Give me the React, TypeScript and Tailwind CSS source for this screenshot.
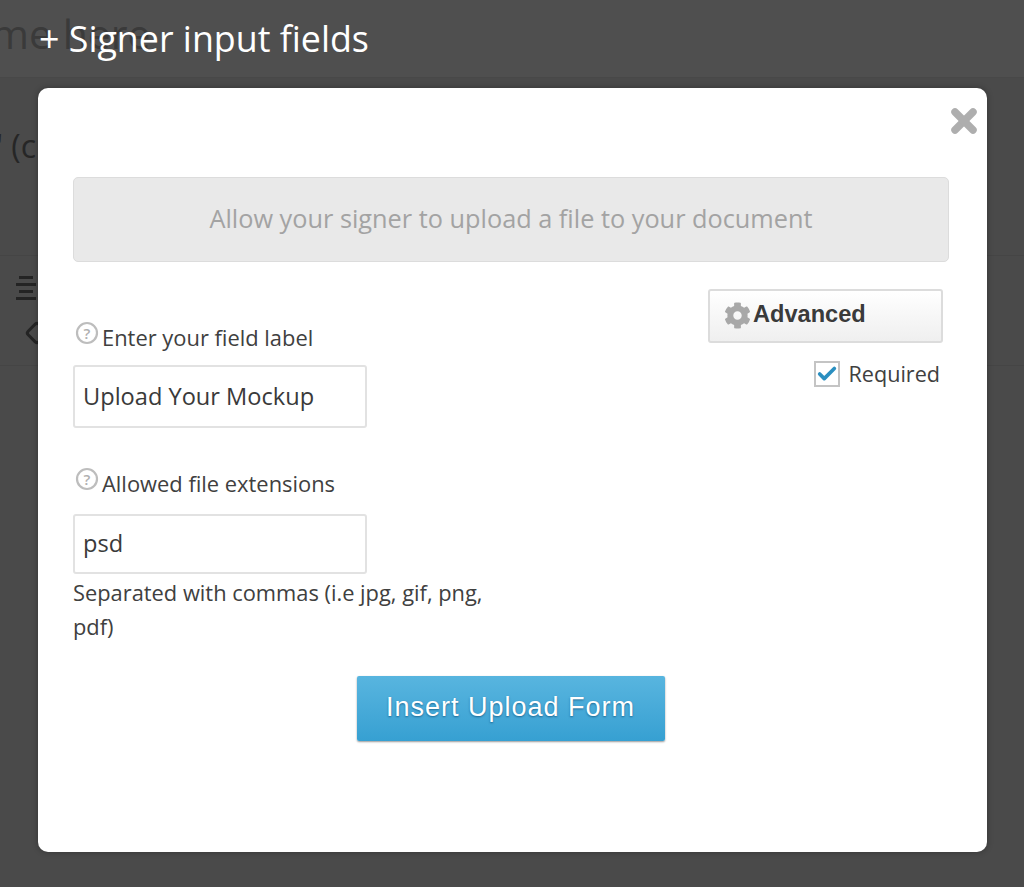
import { Check, X } from "lucide-react";
import { FaCog } from "react-icons/fa";

const sans = "font-['Open_Sans',sans-serif]";

function HelpIcon() {
  return (
    <svg width="24" height="24" viewBox="0 0 24 24" className="shrink-0">
      <circle cx="12" cy="12" r="10" fill="none" stroke="#bdbdbd" strokeWidth="2.2" />
      <text x="12" y="17.5" textAnchor="middle" fontSize="15" fontWeight="600" fill="#b0b0b0" fontFamily="Open Sans, sans-serif">?</text>
    </svg>
  );
}

function Field({ label, value, h, gap }: { label: string; value: string; h: string; gap: string }) {
  return (
    <div className="flex flex-col">
      <div className={`ml-[2px] flex items-start gap-[3px] ${gap}`}>
        <div className="-mt-[2px]"><HelpIcon /></div>
        <span className="text-[21.9px] leading-[30px] text-[#404040]">{label}</span>
      </div>
      <div className={`w-[294px] ${h} flex items-center rounded-[3px] border-2 border-[#e2e2e2] pl-[8px] text-[23.6px] text-[#3a3a3a]`}>
        {value}
      </div>
    </div>
  );
}

export default function App() {
  return (
    <div className={`relative h-[887px] w-full overflow-hidden bg-[#4a4a4a] ${sans}`}>
      {/* page behind the overlay */}
      <div className="relative h-[78px] border-b border-[#484848] bg-[#4f4f4f]">
        <span className="absolute -left-[9px] top-[3px] whitespace-nowrap text-[41px] leading-[60px] text-[#3a3a3a]">me here</span>
        <span className="absolute left-[39px] top-[10px] whitespace-nowrap text-[35.8px] leading-[56px] text-white">+ Signer input fields</span>
      </div>
      <div className="h-[178px] whitespace-nowrap border-b border-[#454545] pt-[48px] text-[32px] leading-[40px] text-[#262626]">
        <span className="-ml-[4px]">' (c</span>
      </div>
      <div className="h-[110px] border-b border-[#454545] pl-[16px] pt-[20px]">
        <div className="flex w-[20px] flex-col gap-[4px]">
          <div className="ml-[3px] h-[3px] w-[14px] bg-[#242424]" />
          <div className="h-[3px] bg-[#242424]" />
          <div className="ml-[3px] h-[3px] w-[14px] bg-[#242424]" />
          <div className="h-[3px] bg-[#242424]" />
        </div>
        <div className="ml-[12px] mt-[24px] h-[18px] w-[18px] rotate-45 rounded-[4px] border-[3px] border-[#242424]" />
      </div>

      {/* modal */}
      <div className="absolute left-[38px] top-[88px] h-[764px] w-[949px] rounded-[10px] bg-white pl-[35px] pr-[38px] pt-[89px] shadow-[0_0_6px_rgba(0,0,0,0.3)]">
        <X className="absolute right-[5px] top-[15px] h-[36px] w-[36px] text-[#aeaeae]" strokeWidth={5} />

        <div className="flex h-[85px] items-center justify-center rounded-[5px] border border-[#dcdcdc] bg-[#e9e9e9] pb-[2px] text-[25.3px] text-[#a3a3a3]">
          Allow your signer to upload a file to your document
        </div>

        <div className="flex justify-between">
          <div className="w-[420px] pt-[61px]">
            <Field label="Enter your field label" value="Upload Your Mockup" h="h-[63px]" gap="mb-[12px]" />
            <div className="mt-[41px]">
              <Field label="Allowed file extensions" value="psd" h="h-[60px]" gap="mb-[15px]" />
            </div>
            <p className="mt-[2px] text-[21.85px] leading-[34px] text-[#404040]">
              Separated with commas (i.e jpg, gif, png, pdf)
            </p>
          </div>

          <div className="mr-[6px] flex flex-col items-end pt-[27px]">
            <div className="flex h-[54px] w-[235px] items-center rounded-[3px] border-2 border-[#dcdcdc] bg-gradient-to-b from-white to-[#efefef] pb-[2px] pl-[14px] font-['Liberation_Sans',sans-serif] text-[23.6px] font-bold text-[#3a3a3a]">
              <FaCog className="h-[27px] w-[27px] text-[#a8a8a8]" />
              <span className="ml-[2px]">Advanced</span>
            </div>
            <div className="mt-[17px] flex items-center gap-[8px] pr-[3px]">
              <div className="flex h-[26px] w-[26px] items-center justify-center border-2 border-[#c4c4c4] bg-white">
                <Check className="h-[22px] w-[22px] text-[#2a8fc0]" strokeWidth={4} />
              </div>
              <span className="text-[21.6px] leading-[28px] text-[#404040]">Required</span>
            </div>
          </div>
        </div>

        <div className="mt-[32px] flex justify-center pr-[1px]">
          <div className="flex h-[65px] w-[308px] items-center justify-center rounded-[2px] bg-gradient-to-b from-[#58b5df] to-[#36a0d2] pb-[2px] font-['Liberation_Sans',sans-serif] text-[27px] font-medium tracking-[1px] text-white shadow-[0_1px_2px_rgba(0,0,0,0.4)] [text-shadow:0_1px_2px_rgba(0,60,100,0.6)]">
            Insert Upload Form
          </div>
        </div>
      </div>
    </div>
  );
}
